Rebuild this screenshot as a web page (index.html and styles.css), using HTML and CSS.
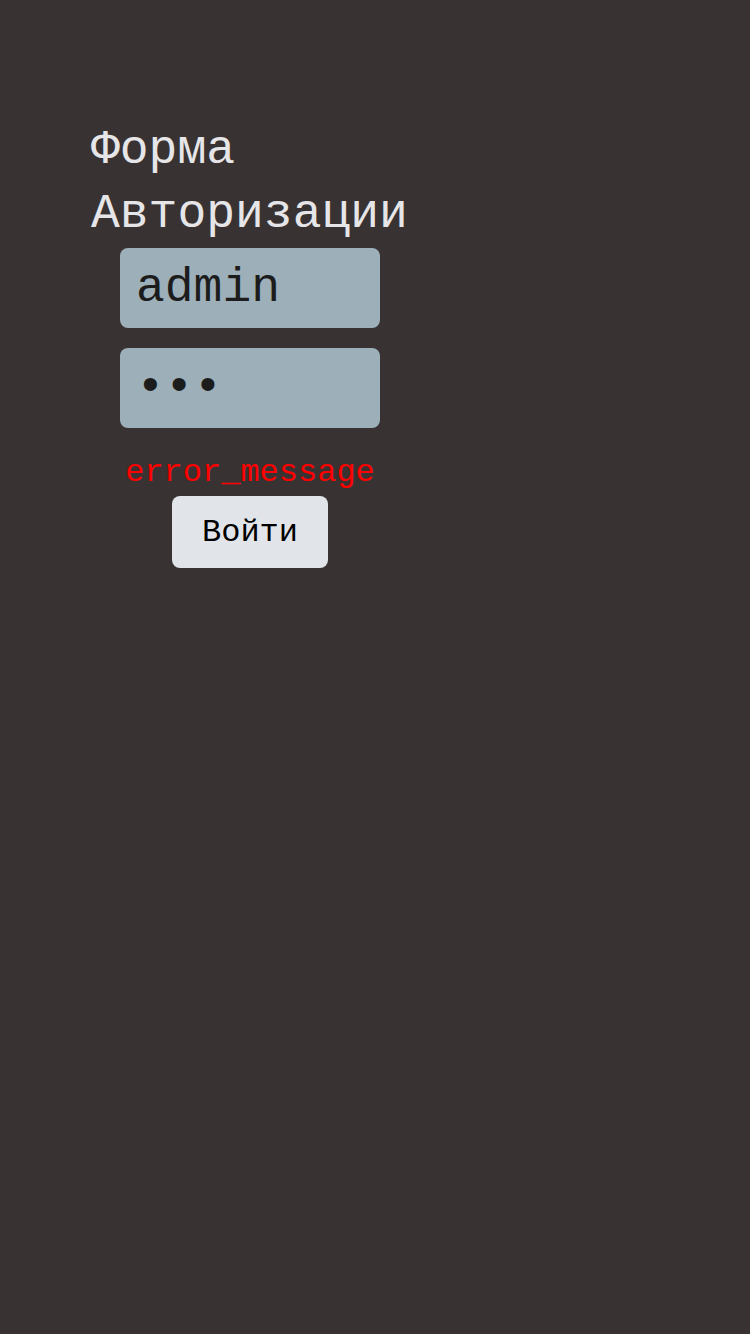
FILE: index.html
```html
<!DOCTYPE html>
<html lang="ru">
<head>
<meta charset="utf-8">
<title>Форма Авторизации</title>
<link rel="stylesheet" href="styles.css">
</head>
<body>
<main class="login">
  <h1 class="login__title">Форма Авторизации</h1>
  <input class="login__input" type="text" value="admin">
  <input class="login__input login__input--password" type="password" value="123">
  <p class="login__error">error_message</p>
  <button class="login__button" type="button">Войти</button>
</main>
</body>
</html>
```
FILE: styles.css
```css
html, body {
  margin: 0;
  padding: 0;
  background: #383232;
  min-height: 100%;
}
body {
  font-family: "Liberation Mono", "DejaVu Sans Mono", monospace;
  height: 1334px;
}
.login {
  width: 324px;
  margin-left: 88px;
  padding-top: 118px;
  display: flex;
  flex-direction: column;
  align-items: center;
}
.login__title {
  align-self: stretch;
  margin: 0 0 2px 0;
  padding-left: 3px;
  font-size: 48px;
  font-weight: normal;
  line-height: 64px;
  color: #e6e6e9;
}
.login__input {
  box-sizing: border-box;
  width: 260px;
  height: 80px;
  margin: 0 0 20px 0;
  padding: 0 16px;
  border: none;
  border-radius: 8px;
  background: #9dafb8;
  color: #1c1c1c;
  font-family: "Liberation Mono", "DejaVu Sans Mono", monospace;
  font-size: 48px;
  outline: none;
}
.login__input--password {
  padding-top: 0;
  padding-bottom: 2px;
}
.login__error {
  margin: 3px 0 1px 0;
  color: #ff0000;
  font-size: 32px;
  line-height: 44px;
}
.login__button {
  box-sizing: border-box;
  width: 156px;
  height: 72px;
  padding: 0;
  border: none;
  border-radius: 8px;
  background: #e1e5ea;
  color: #000;
  font-family: "Liberation Mono", "DejaVu Sans Mono", monospace;
  font-size: 32px;
}
```
